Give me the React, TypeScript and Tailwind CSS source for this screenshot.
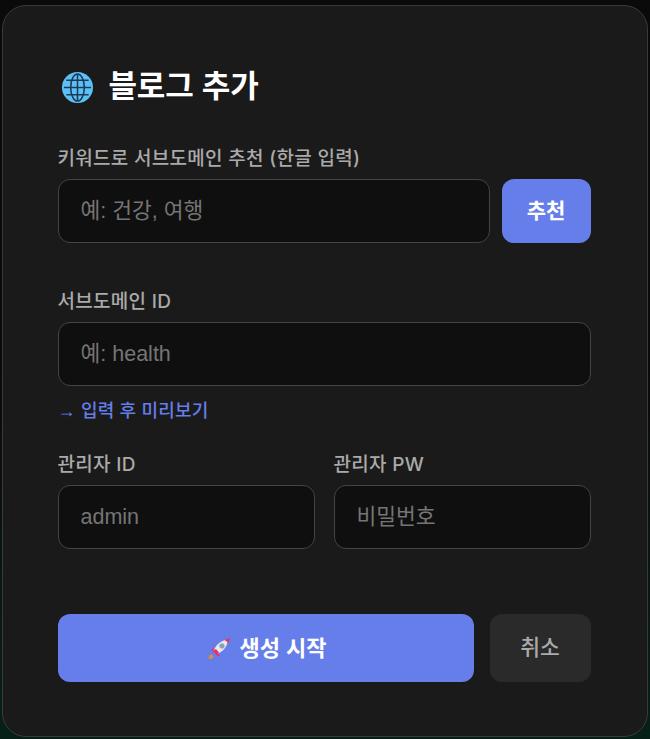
const FONT = "font-['Liberation_Sans','Noto_Sans_CJK_KR',sans-serif]";
const LABEL = "block h-[25px] pt-[1px] mb-[8px] font-['Inter','Noto_Sans_CJK_KR',sans-serif] text-[19px] tracking-[0.3px] leading-[24px] font-medium text-[#aaaaaa]";
const INPUT = "h-[64px] px-[22px] pt-[1px] bg-[#0f0f0f] border-[1.500px] border-[#444444] rounded-[12px] text-[21.500px] text-white placeholder:text-[#757575] outline-none";

function GlobeIcon() {
  return (
    <svg width="33" height="33" viewBox="0 0 34 34" fill="none">
      <circle cx="17" cy="17" r="16" fill="#5cc0f7" />
      <g stroke="#1c3a55" strokeWidth="1.600">
        <ellipse cx="17" cy="17" rx="7" ry="14" />
        <path d="M17 3v28M3 17h28M5.500 9.500h23M5.500 24.500h23" />
      </g>
    </svg>
  );
}

function RocketIcon() {
  return (
    <svg width="24" height="24" viewBox="0 0 24 24" fill="none">
      <path d="M1 23c-.6-2 .2-4 2.400-5l2.200 2.400C5 22.400 3 23.400 1 23z" fill="#e08a3c" />
      <path d="M6 12.500 2.800 13.600l2 1 1.600 1.800z" fill="#e8315f" />
      <path d="M11.500 18 10.400 21.200l-1-2-1.800-1.600z" fill="#e8315f" />
      <path d="M5.500 15.500C7 10 12 4.500 20 3.500c-.6 8-6 13-12 14.800z" fill="#e8e8ee" />
      <path d="M16.500 3.900 22 2l-1.800 5.600c-.8-1.600-2-2.900-3.700-3.700z" fill="#e8315f" />
      <path d="M4.800 15.300 7.800 13 11 16.300 8.700 19.200z" fill="#e8315f" />
      <circle cx="14" cy="10" r="2.300" fill="#7fa3c4" stroke="#9a9aa8" strokeWidth="0.8" />
    </svg>
  );
}

function Field({ label, placeholder }: { label: string; placeholder: string }) {
  return (
    <div className="flex-1 min-w-0">
      <label className={LABEL}>{label}</label>
      <input placeholder={placeholder} className={`w-full ${INPUT}`} />
    </div>
  );
}

export default function App() {
  return (
    <div className={`${FONT} min-h-[739px] bg-gradient-to-b from-[#0a0a0a] via-[#0a0a0a] to-[#062018] pt-[5px] px-[2px] pb-[2px]`}>
      <div className="h-[732px] bg-[#1a1a1a] border-[1.500px] border-[#3a3a3a] rounded-[24px] pl-[54.500px] pr-[56.500px] pt-[58px]">
        <h2 className="flex items-center gap-[15px] h-[46px] pl-[3px] text-[31px] tracking-[-0.2px] font-bold text-white">
          <GlobeIcon />
          <span>블로그 추가</span>
        </h2>

        <div className="mt-[36px]">
          <label className={LABEL}>키워드로 서브도메인 추천 (한글 입력)</label>
          <div className="flex gap-[12px]">
            <input placeholder="예: 건강, 여행" className={`flex-1 min-w-0 ${INPUT}`} />
            <button className="w-[89px] h-[64px] bg-[#667eea] rounded-[12px] text-[21px] font-bold text-white">추천</button>
          </div>
        </div>

        <div className="mt-[46px]">
          <Field label="서브도메인 ID" placeholder="예: health" />
        </div>
        <p className="mt-[13px] h-[24px] text-[18px] tracking-[0.2px] leading-[24px] font-medium text-[#667eea]">→ 입력 후 미리보기</p>

        <div className="flex gap-[19px] mt-[29px]">
          <Field label="관리자 ID" placeholder="admin" />
          <Field label="관리자 PW" placeholder="비밀번호" />
        </div>

        <div className="flex gap-[16px] mt-[65px]">
          <button className="flex-1 flex items-center justify-center gap-[7px] pl-[4px] h-[68px] bg-[#667eea] rounded-[12px] text-[22px] font-bold text-white">
            <RocketIcon />
            생성 시작
          </button>
          <button className="w-[101px] h-[68px] bg-[#2a2a2a] rounded-[12px] text-[21.500px] font-medium text-[#aaaaaa]">취소</button>
        </div>
      </div>
    </div>
  );
}
